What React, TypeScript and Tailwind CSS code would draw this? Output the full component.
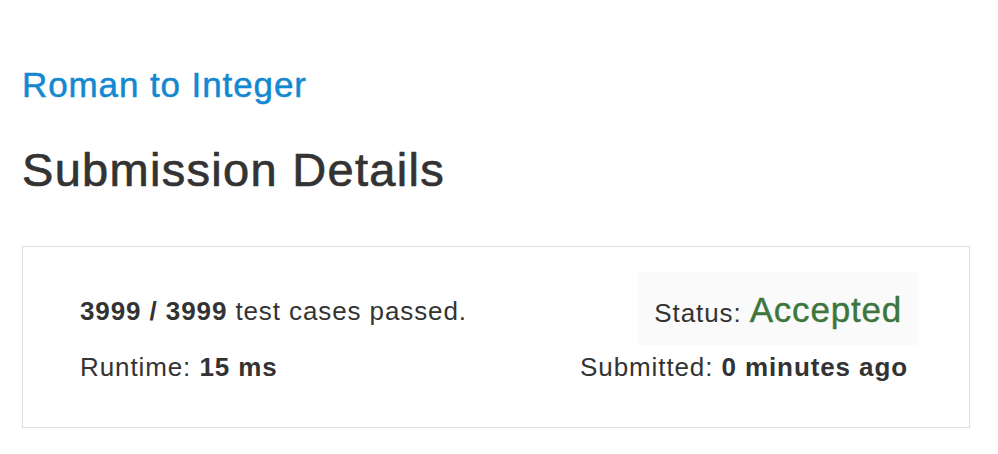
import React from 'react'

export default function App() {
  return (
    <div className="w-[998px] h-[454px] bg-white text-[#333] font-['Liberation_Sans',Arial,sans-serif] px-[22px] pt-[65px]">
      <a href="#" className="block text-[35px] leading-[40px] tracking-[0.9px] text-[#1388d0] [-webkit-text-stroke:0.5px_#1388d0]">
        Roman to Integer
      </a>
      <h1 className="mt-[38px] text-[47px] leading-[54px] tracking-[1.3px] [-webkit-text-stroke:0.7px_#333]">
        Submission Details
      </h1>
      <div className="mt-[49px] w-[948px] h-[182px] border border-[#ddd] flex justify-between pl-[57px] pr-[61px] pt-[25px]">
        <div className="flex flex-col text-[26px] tracking-[0.9px]">
          <div className="h-[73px] flex items-center pt-[5px]">
            <span>
              <b>3999 / 3999</b> test cases passed.
            </span>
          </div>
          <div className="leading-[30px] mt-[7px]">
            Runtime: <b>15 ms</b>
          </div>
        </div>
        <div className="flex flex-col items-end text-[26px] tracking-[0.9px]">
          <div className="h-[73px] flex items-center bg-[#fafafa] pl-[16px] pr-[16px] mr-[-10px] pt-[3px]">
            <span>
              Status:{' '}
              <span className="text-[35px] tracking-[0.8px] text-[#3c763d] [-webkit-text-stroke:0.4px_#3c763d]">
                Accepted
              </span>
            </span>
          </div>
          <div className="leading-[30px] mt-[7px]">
            Submitted: <b>0 minutes ago</b>
          </div>
        </div>
      </div>
    </div>
  )
}
